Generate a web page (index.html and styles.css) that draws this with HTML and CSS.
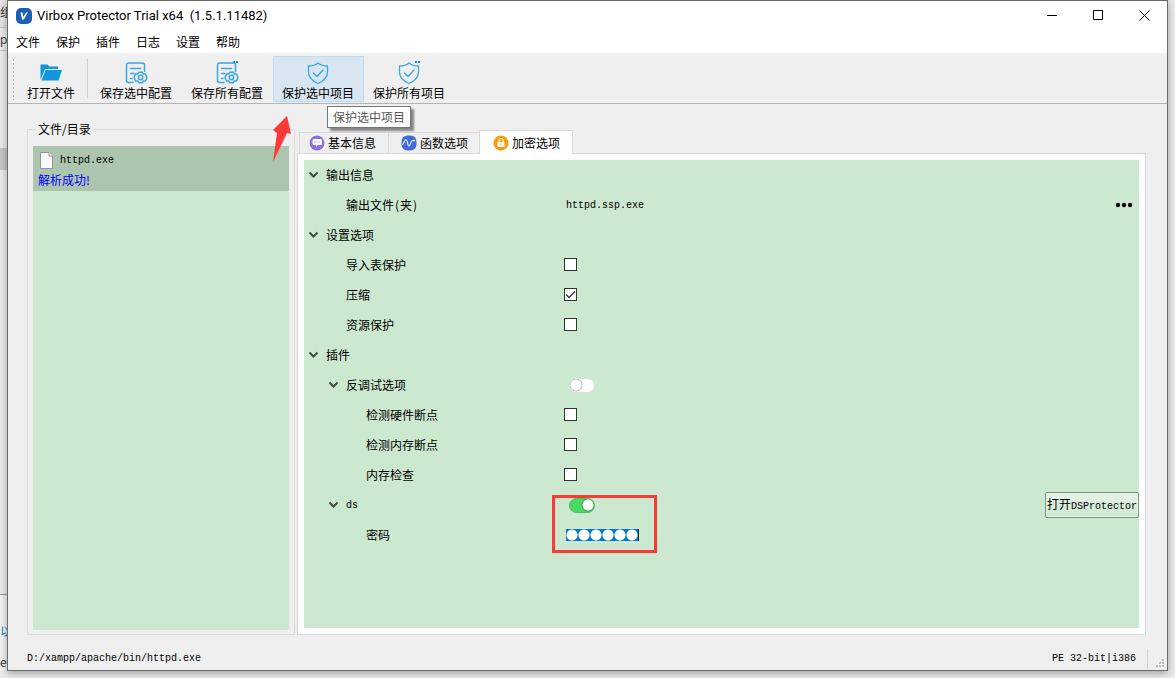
FILE: index.html
```html
<!DOCTYPE html>
<html lang="zh-CN">
<head>
<meta charset="utf-8">
<title>Virbox Protector Trial x64</title>
<link rel="stylesheet" href="styles.css">
</head>
<body>
<svg class="defs" aria-hidden="true">
  <symbol id="chevron" viewBox="0 0 12 12"><path d="M1.500 3.500 5.500 7.500l4-4" fill="none" stroke="#404a41" stroke-width="2"/></symbol>
  <symbol id="config" viewBox="0 0 24 24">
    <g fill="none" stroke="#3aa7e0" stroke-width="1.500" stroke-linecap="round" stroke-linejoin="round">
      <path d="M9 21.500H4.500a2 2 0 0 1-2-2V4a2 2 0 0 1 2-2H18.500a2 2 0 0 1 2 2v6.500M6.500 7.500h10M6.500 12.500h3.500M6.500 17.500h1.500"/>
      <path d="M14.700 11.200h3.600l1 1.900h2.200l1.500 3.400-1.500 3.400h-2.200l-1 1.900h-3.600l-1-1.900h-2.200L10 16.500l1.500-3.400h2.200z"/>
      <circle cx="16.500" cy="16.500" r="2.200"/>
    </g>
  </symbol>
  <symbol id="shield" viewBox="0 0 24 24">
    <g fill="none" stroke="#3aa7e0" stroke-width="1.300" stroke-linecap="round" stroke-linejoin="round">
      <path d="M12 2C9.500 4 6 5 2.500 5v6c0 5.500 4 9 9.500 11.500 5.500-2.500 9.500-6 9.500-11.500V5C18 5 14.500 4 12 2z"/>
      <path d="m7.500 12 3.500 3.500 6-6.500"/>
    </g>
  </symbol>
  <symbol id="dots" viewBox="0 0 24 24"><path d="M18 0h2v2h-2zM21 0h2v2h-2z" fill="#1296db"/></symbol>
</svg>

<div class="behind" aria-hidden="true">
  <div class="behind-title">组</div>
  <div class="behind-path">p</div>
  <div class="behind-body"><div class="behind-thumb"></div></div>
  <div class="behind-foot"><span class="behind-link">以</span><span>e</span></div>
</div>

<div class="window">
  <header class="titlebar">
    <svg class="logo" width="16" height="16" viewBox="0 0 16 16"><rect width="16" height="16" rx="5" fill="#1c5fb0"/><path d="M4.500 4.500h2l.8 4.500 2.700-4.500h2L7.800 11.500H6z" fill="#fff"/></svg>
    <h1>Virbox Protector Trial x64&nbsp; (1.5.1.11482)</h1>
    <div class="winbuttons">
      <button aria-label="最小化"><svg width="11" height="11"><path d="M0 5.500h10" stroke="#000"/></svg></button>
      <button aria-label="最大化"><svg width="11" height="11"><path d="M.5.5h9v9h-9z" fill="none" stroke="#000"/></svg></button>
      <button aria-label="关闭"><svg width="11" height="11"><path d="m.5.5 10 10m0-10-10 10" stroke="#000"/></svg></button>
    </div>
  </header>

  <nav class="menubar">
    <button>文件</button><button>保护</button><button>插件</button><button>日志</button><button>设置</button><button>帮助</button>
  </nav>

  <div class="toolbar">
    <span class="handle"></span>
    <button class="tool tool-open"><svg width="22" height="22" viewBox="0 0 22 22"><path d="M.5 19V3.500h7l2 2h8.500V8H5z" fill="#1296db"/><path d="M5.500 9H22l-3.500 10.500H1.500z" fill="#1296db"/></svg>打开文件</button>
    <span class="divider"></span>
    <button class="tool"><svg width="24" height="24"><use href="#config"/></svg>保存选中配置</button>
    <button class="tool"><svg width="24" height="24"><use href="#config"/><use href="#dots"/></svg>保存所有配置</button>
    <button class="tool tool-hover"><svg width="24" height="24"><use href="#shield"/></svg>保护选中项目<span class="tooltip" role="tooltip">保护选中项目</span></button>
    <button class="tool"><svg width="24" height="24"><use href="#shield"/><use href="#dots"/></svg>保护所有项目</button>
  </div>

  <main class="main">
    <fieldset class="files">
      <legend>文件/目录</legend>
      <div class="filelist">
        <div class="file">
          <div class="file-name"><svg width="13" height="17" viewBox="0 0 13 17"><path d="M.5.5H9L12.500 4v12.500H.5z" fill="#f8faf9" stroke="#8f9691"/><path d="M9 .5V4h3.500" fill="#fff" stroke="#8f9691"/></svg><span class="mono">httpd.exe</span></div>
          <div class="file-state">解析成功!</div>
        </div>
      </div>
      <svg class="arrow" width="20" height="48" viewBox="0 0 20 48"><path d="M15 1 19 19l-4-1L1 47 5 18 1 15z" fill="#fb3a38"/></svg>
    </fieldset>

    <section class="details">
      <div class="tabs" role="tablist">
        <button class="tab" role="tab"><svg width="16" height="16" viewBox="0 0 16 16"><circle cx="8" cy="8" r="7.500" fill="#8d71df"/><path d="M5 4h6.500a1.500 1.500 0 0 1 1.500 1.500v3A1.500 1.500 0 0 1 11.500 10H9l-2 2v-2H5a1.500 1.500 0 0 1-1.500-1.500v-3A1.500 1.500 0 0 1 5 4z" fill="#fff"/><path d="M5.500 7h1m1 0h1m1 0h1" stroke="#8d71df"/></svg>基本信息</button>
        <button class="tab" role="tab"><svg width="16" height="16" viewBox="0 0 16 16"><rect x=".5" y=".5" width="15" height="15" rx="6" fill="#4469d8"/><path d="M1 10C3 9 3.500 4.500 5 4.500S6.500 11 8 11s1.500-5.500 3.500-5.500H14" fill="none" stroke="#c9efff" stroke-width="1.200"/><circle cx="13" cy="5.500" r="1" fill="#fff"/></svg>函数选项</button>
        <button class="tab tab-active" role="tab" aria-selected="true"><svg width="16" height="16" viewBox="0 0 16 16"><circle cx="8" cy="8" r="7.500" fill="#fe9a05"/><path d="M4.500 7h7v5h-7z" fill="#fff"/><path d="M6 7V5.500a2 2 0 0 1 4 0V7" fill="none" stroke="#fff" stroke-width="1.200"/><path d="M8 8.500v2" stroke="#fe9a05"/></svg>加密选项</button>
      </div>
      <div class="panel">
        <div class="props">
          <div class="row"><div class="name"><button class="fold" aria-label="折叠"><svg width="12" height="12"><use href="#chevron"/></svg></button>输出信息</div></div>
          <div class="row"><div class="name leaf">输出文件<span class="paren">(</span>夹<span class="paren">)</span></div><div class="value"><span class="mono text-value">httpd.ssp.exe</span></div><button class="more" aria-label="浏览"><svg width="18" height="6"><circle cx="3" cy="3" r="2.200"/><circle cx="9" cy="3" r="2.200"/><circle cx="15" cy="3" r="2.200"/></svg></button></div>
          <div class="row"><div class="name"><button class="fold" aria-label="折叠"><svg width="12" height="12"><use href="#chevron"/></svg></button>设置选项</div></div>
          <div class="row"><label class="name leaf" for="imports">导入表保护</label><div class="value"><input type="checkbox" id="imports"></div></div>
          <div class="row"><label class="name leaf" for="compress">压缩</label><div class="value"><input type="checkbox" id="compress" checked></div></div>
          <div class="row"><label class="name leaf" for="resources">资源保护</label><div class="value"><input type="checkbox" id="resources"></div></div>
          <div class="row"><div class="name"><button class="fold" aria-label="折叠"><svg width="12" height="12"><use href="#chevron"/></svg></button>插件</div></div>
          <div class="row"><div class="name nested"><button class="fold" aria-label="折叠"><svg width="12" height="12"><use href="#chevron"/></svg></button><label for="antidebug">反调试选项</label></div><div class="value"><input type="checkbox" class="switch" id="antidebug"></div></div>
          <div class="row"><label class="name nested-leaf" for="hardware">检测硬件断点</label><div class="value"><input type="checkbox" id="hardware"></div></div>
          <div class="row"><label class="name nested-leaf" for="memory">检测内存断点</label><div class="value"><input type="checkbox" id="memory"></div></div>
          <div class="row"><label class="name nested-leaf" for="memcheck">内存检查</label><div class="value"><input type="checkbox" id="memcheck"></div></div>
          <div class="row"><div class="name nested"><button class="fold" aria-label="折叠"><svg width="12" height="12"><use href="#chevron"/></svg></button><label class="mono" for="ds">ds</label></div><div class="value"><input type="checkbox" class="switch" id="ds" checked><span class="highlight"></span></div><button class="open-ds">打开<span class="mono">DSProtector</span></button></div>
          <div class="row"><label class="name nested-leaf" for="password">密码</label><div class="value"><input type="password" class="password" id="password" value="123456"></div></div>
        </div>
      </div>
    </section>
  </main>

  <footer class="status mono">
    <span>D:/xampp/apache/bin/httpd.exe</span>
    <span class="arch">PE 32-bit|i386</span>
    <svg class="grip" width="9" height="9"><path d="M6 0h2v2H6zM3 3h2v2H3zM6 3h2v2H6zM0 6h2v2H0zM3 6h2v2H3zM6 6h2v2H6z" fill="#bdbdbd"/></svg>
  </footer>
</div>
</body>
</html>
```
FILE: styles.css
```css
* { box-sizing: border-box; }

body {
  margin: 0;
  min-height: 100vh;
  padding: 0 7px 7px 0;
  display: grid;
  grid-template-columns: 7px minmax(0, 1fr);
  background: #ececec;
  color: #000;
  font: 12px/16px "Noto Sans CJK SC", sans-serif;
}

button {
  margin: 0;
  padding: 0;
  border: 0;
  background: none;
  color: inherit;
  font: inherit;
}

svg { display: block; flex: none; }
.defs { position: absolute; width: 0; height: 0; }
.mono { font-family: "Liberation Mono", monospace; font-size: 10px; }
.name .mono, .file-name .mono, .value .mono { padding-top: 2px; }

/* Edge of the window lying underneath */
.behind { display: flex; flex-direction: column; overflow: hidden; white-space: nowrap; color: #333; }
.behind-title { height: 28px; padding-top: 4px; border-bottom: 1px solid #c8c8c8; background: #e4e4e4; }
.behind-path { height: 23px; padding-top: 4px; border-bottom: 1px solid #c8c8c8; font-family: "Open Sans", sans-serif; }
.behind-body { flex: 1; padding-top: 97px; border-bottom: 1px solid #999; }
.behind-thumb { height: 22px; background: #c6c6c6; }
.behind-foot { height: 76px; padding-top: 28px; display: grid; gap: 14px; background: #f4f4f4; }
.behind-link { color: #1683c4; }

.window {
  display: flex;
  flex-direction: column;
  border: 1px solid #6b6b6b;
  background: #efefef;
  box-shadow: 0 2px 8px rgba(0, 0, 0, .35);
  position: relative;
}

.titlebar { display: flex; align-items: center; height: 29px; padding-left: 8px; background: #fff; }
.titlebar h1 { margin: 0 auto 0 5px; font: 13px/16px Roboto, sans-serif; }
.winbuttons { display: flex; }
.winbuttons button { width: 46px; height: 28px; display: grid; place-items: center; }

.menubar { display: flex; gap: 16px; height: 25px; padding: 1px 8px 0; background: #fff; border-bottom: 2px solid #f0f0f0; }

.toolbar { display: flex; height: 49px; padding: 1px 0 1px 4px; border-bottom: 1px solid #b5b5b5; }
.handle { width: 3px; margin: 2px 0; background: radial-gradient(circle, #b0b0b0 1px, transparent 1px) 0 0 / 3px 4px; }
.tool { position: relative; width: 91px; padding: 4px 1px 0 0; display: flex; flex-direction: column; align-items: center; justify-content: space-between; border: 1px solid transparent; }
.tool-open { width: 72px; padding-right: 0; }
.divider { width: 1px; margin: 3px 3px 4px 0; background: #cfcfcf; }
.tool-hover { background: #d8e6f1; border-color: #c0dcf3; }
.tooltip { position: absolute; z-index: 2; left: 53px; top: 49px; padding: 2px 5px; border: 1px solid #767676; background: #fff; box-shadow: 3px 3px 2px rgba(0, 0, 0, .45); color: #575757; white-space: nowrap; }

.main { flex: 1; display: flex; gap: 2px; padding: 17px 21px 10px 19px; }

.files { position: relative; width: 268px; min-width: 0; margin: 0; padding: 9px 5px 4px; border: 1px solid #dcdcdc; display: flex; }
.files legend { margin-left: 3px; padding: 0 2px; }
.filelist { flex: 1; background: #cce8cf; }
.file { padding: 5px 5px 3px; background: #adc4ae; }
.file-name { display: flex; gap: 7px; align-items: center; padding-left: 2px; height: 18px; margin-bottom: 3px; }
.file-state { color: #00f; }
.arrow { position: absolute; z-index: 1; right: 2px; top: -22px; }

.details { flex: 1; min-width: 0; padding-top: 9px; display: flex; flex-direction: column; }
.tabs { display: flex; align-items: flex-end; padding-left: 2px; }
.tab { display: flex; align-items: center; gap: 3px; height: 21px; padding: 0 12px 0 9px; border: 1px solid #d9d9d9; border-width: 1px 0 0 1px; }
.tab + .tab { padding-left: 12px; padding-right: 11px; }
.tab + .tab-active { height: 24px; margin-bottom: -1px; padding-left: 13px; padding-right: 12px; border-right-width: 1px; background: #fff; position: relative; }
.panel { flex: 1; display: flex; padding: 6px; border: 1px solid #d9d9d9; background: #fff; }
.props { flex: 1; background: #cce8cf; }

.row { display: grid; grid-template-columns: 260px minmax(0, 1fr) auto; align-items: center; height: 30px; }
.name { display: flex; align-items: center; padding-left: 4px; }
.fold { margin-right: 6px; }
.leaf { padding-left: 42px; }
.nested { padding-left: 24px; }
.nested-leaf { padding-left: 62px; }
.paren { width: 6px; text-align: center; }
.value { position: relative; display: flex; align-items: center; }
.text-value { padding-left: 2px; }
.more { padding-right: 6px; }

input[type="checkbox"] { appearance: none; width: 13px; height: 13px; margin: 0 0 2px; border: 1px solid #333; background: #fff; }
#compress { background: #fff url("data:image/svg+xml,%3Csvg xmlns='http://www.w3.org/2000/svg' viewBox='0 0 11 11'%3E%3Cpath d='M1 5.500 4 8.500 10 2.500' fill='none' stroke='%23333' stroke-width='1.300'/%3E%3C/svg%3E"); }
input[type="checkbox"].switch { width: 26px; height: 15px; margin: 0 0 0 5px; border: 1px solid #dedede; border-radius: 8px; background: radial-gradient(circle at 6px 6px, #fff 5px, #bbb 6px, transparent 7px) #fff; }
input[type="checkbox"].switch:checked { border-color: #43c45b; background: radial-gradient(circle at 18px 6px, #fff 5px, #38a34c 6px, transparent 7px) #4cd964; }

/* Large round marks behind each masked character */
.password { width: 73px; height: 12px; margin-left: 2px; padding: 0; border: 0; border-right: 1px solid #222; background: radial-gradient(circle, #fff 5px, #0078d7 6px) 0 0 / 12px 12px; color: #fff; font: 20px/12px "DejaVu Sans Mono", monospace; }
.highlight { position: absolute; left: -12px; top: -3px; width: 105px; height: 58px; border: 3px solid #fb3a38; }
.open-ds { width: 94px; height: 26px; border: 1px solid #7f9181; border-radius: 2px; background: linear-gradient(#e6f3e7, #cce8cf); box-shadow: inset 0 0 0 1px #e3f3e5; white-space: nowrap; }

.status { display: flex; align-items: center; height: 25px; padding: 2px 2px 0 19px; }
.arch { margin-left: auto; padding-right: 11px; border-right: 1px solid #d2d2d2; line-height: 20px; }
.grip { margin: 10px 0 0 8px; }
```
